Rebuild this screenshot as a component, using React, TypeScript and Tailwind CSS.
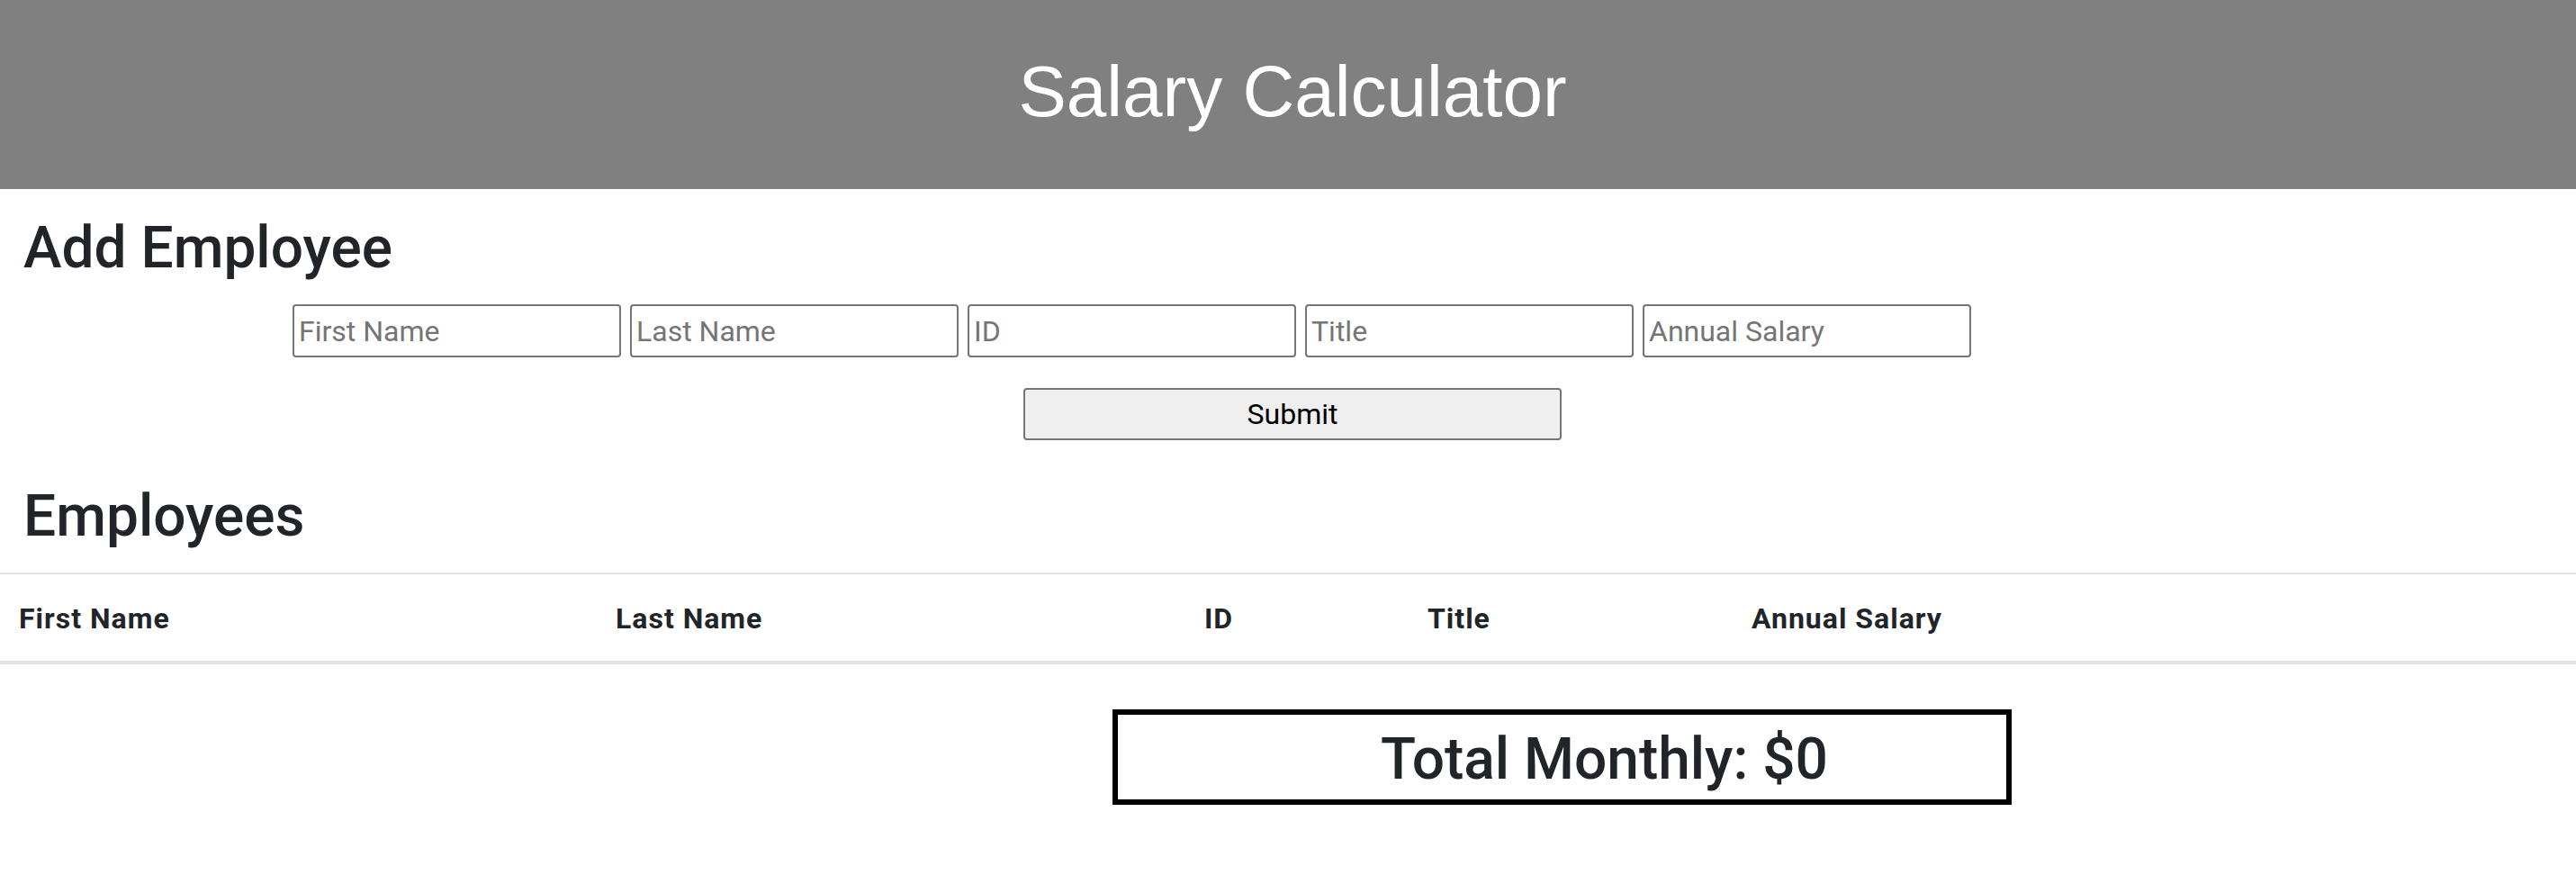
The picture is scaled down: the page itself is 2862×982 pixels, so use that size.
import React from "react";

const fields = ["First Name", "Last Name", "ID", "Title", "Annual Salary"];
const cols = [
  { label: "First Name", cls: "w-[668px] shrink-0 pl-[21px] pr-[16px]" },
  { label: "Last Name", cls: "w-[654px] shrink-0 px-[16px]" },
  { label: "ID", cls: "w-[248px] shrink-0 px-[16px]" },
  { label: "Title", cls: "w-[360px] shrink-0 px-[16px]" },
  { label: "Annual Salary", cls: "flex-1 px-[16px]" },
];

export default function App() {
  return (
    <div className="w-[2862px] min-h-[982px] bg-white text-[#212529] [font-family:Roboto,'Noto_Sans',sans-serif]">
      <header className="h-[210px] bg-[#808080] pt-[54px] pl-[10px] flex justify-center">
        <h1 className="text-white text-[80px] leading-[96px] font-normal [font-family:'Liberation_Sans',Arial,sans-serif]">
          Salary Calculator
        </h1>
      </header>

      <h2 className="mt-[28px] pl-[26px] text-[64px] leading-[76px] font-medium">Add Employee</h2>

      <div className="mt-[24px] pl-[325px] flex gap-[10px]">
        {fields.map((f) => (
          <input
            key={f}
            placeholder={f}
            className="w-[365px] h-[59px] border-2 border-[#767676] rounded-[4px] px-[5px] text-[32px] bg-white placeholder:text-[#757575] text-black outline-none"
          />
        ))}
      </div>

      <div className="mt-[34px] pl-[10px] flex justify-center">
        <button className="w-[598px] h-[58px] bg-[#efefef] border-2 border-[#767676] rounded-[4px] text-[32px] text-black">
          Submit
        </button>
      </div>

      <h2 className="mt-[47px] pl-[26px] text-[64px] leading-[76px] font-medium">Employees</h2>

      <div className="mt-[24px] w-full border-t-2 border-b-4 border-[#dee2e6] flex">
        {cols.map((c) => (
          <div
            key={c.label}
            className={`${c.cls} pt-[25px] pb-[23px] text-[32px] leading-[48px] font-bold tracking-[1px]`}
          >
            {c.label}
          </div>
        ))}
      </div>

      <div className="mt-[50px] ml-[1236px] w-[999px] border-[6px] border-black pt-[12px] pb-[6px] pl-[94px] text-center">
        <h2 className="text-[64px] leading-[76px] font-medium">Total Monthly: $0</h2>
      </div>
    </div>
  );
}
